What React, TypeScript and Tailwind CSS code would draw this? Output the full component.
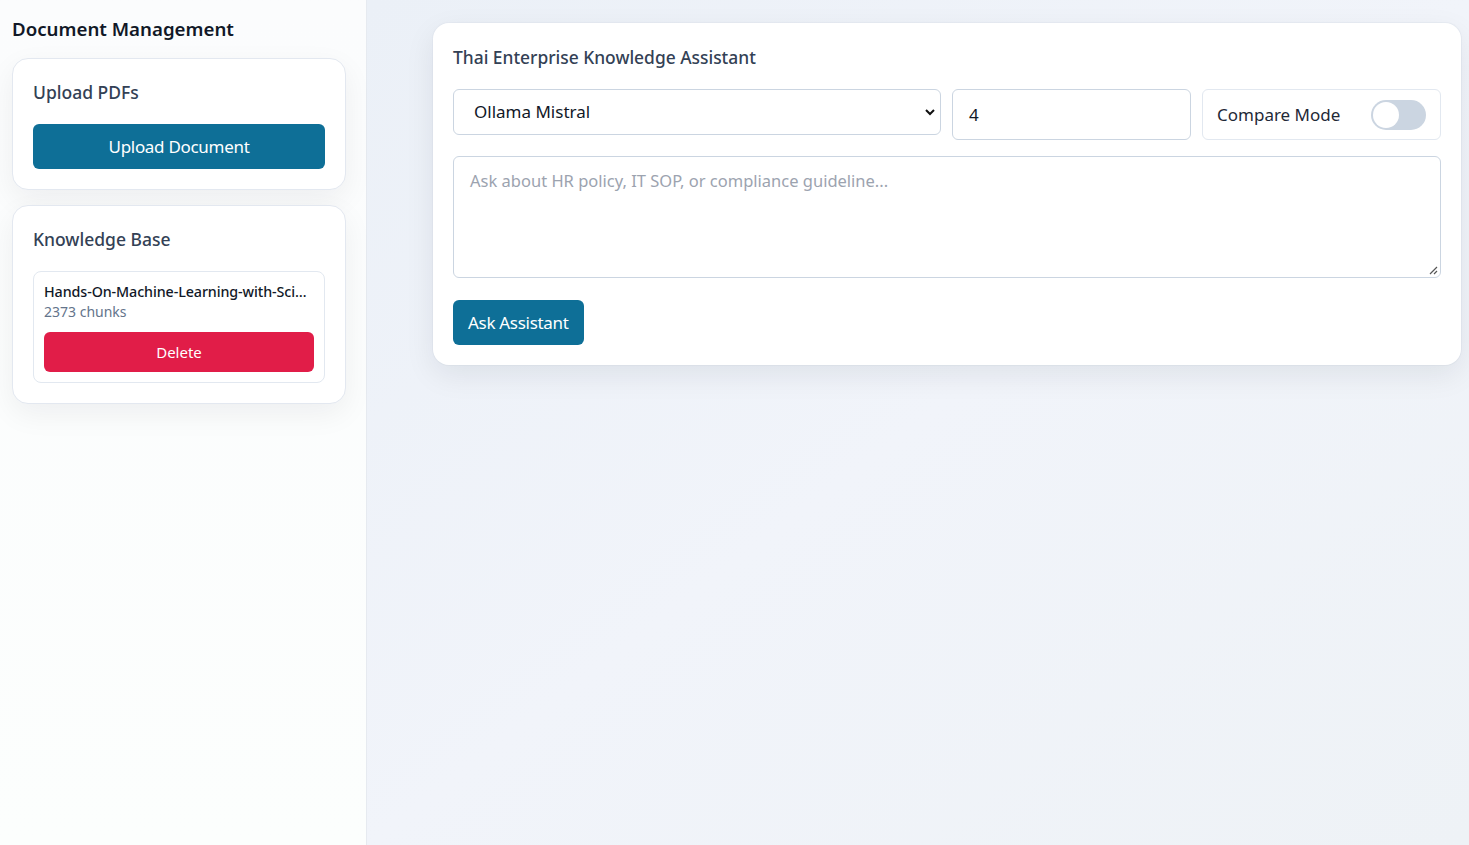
import React from "react";

export default function App() {
  return (
    <div
      className="flex w-[1469px] h-[845px] overflow-hidden"
      style={{ fontFamily: '"Noto Sans", "Open Sans", sans-serif' }}
    >
      {/* Sidebar */}
      <aside className="w-[367px] shrink-0 h-full bg-gradient-to-b from-[#fbfcfd] to-[#fcfefd] border-r border-[#e6eaf0] px-3 pt-[15px]">
        <h1 className="text-[18.7px] font-semibold text-[#111827] leading-[28px]">Document Management</h1>
        <div className="mt-[15px] w-[334px] bg-white rounded-2xl border border-[#e3e8f0] shadow-[0_10px_30px_rgba(15,23,42,0.06)] p-5">
          <h2 className="text-[17.5px] font-medium text-[#334155] leading-[28px] -mt-[1px]">Upload PDFs</h2>
          <button className="mt-[18px] w-full h-[45px] rounded-md bg-[#0e6f97] text-white text-[17px] tracking-[-0.3px]">
            Upload Document
          </button>
        </div>
        <div className="mt-[15px] w-[334px] bg-white rounded-2xl border border-[#e3e8f0] shadow-[0_10px_30px_rgba(15,23,42,0.06)] p-5">
          <h2 className="text-[17.5px] font-medium text-[#334155] leading-[28px] -mt-[1px]">Knowledge Base</h2>
          <div className="mt-[18px] rounded-lg border border-[#e2e8f0] p-[10px]">
            <div className="text-[14.3px] font-medium text-[#111827] leading-[20px] truncate tracking-[-0.1px]">
              Hands-On-Machine-Learning-with-Scikit-Learn-Keras-and-TensorFlow.pdf
            </div>
            <div className="text-[14px] text-[#64748b] leading-[20px]">2373 chunks</div>
            <button className="mt-[10px] w-full h-[40px] rounded-md bg-[#e11d48] text-white text-[15px]">Delete</button>
          </div>
        </div>
      </aside>

      {/* Main */}
      <main className="flex-1 h-full bg-gradient-to-br from-[#ebf0f7] via-[#f1f4fa] to-[#eef2f6] pl-[66px] pr-[8px] pt-[23px]">
        <div className="bg-white rounded-2xl shadow-[0_10px_30px_rgba(15,23,42,0.08),0_0_0_1px_rgba(226,232,240,0.6)] p-5">
          <h2 className="text-[17.4px] font-medium text-[#334155] leading-[28px]">
            Thai Enterprise Knowledge Assistant
          </h2>
          <div className="mt-[18px] grid grid-cols-[488px_239px_1fr] gap-[11px] items-start">
            <div className="relative h-[46px] rounded-md border border-[#cbd5e1] bg-white flex items-center pl-5 text-[17px] text-[#111827]">
              Ollama Mistral
              <svg className="absolute right-[4px] top-[17px]" width="12" height="10" viewBox="0 0 12 10">
                <path d="M2 3 L6 7 L10 3" fill="none" stroke="#111" strokeWidth="2" />
              </svg>
            </div>
            <div className="h-[51px] rounded-md border border-[#cbd5e1] bg-white flex items-center px-4 text-[17px] text-[#111827]">
              4
            </div>
            <div className="h-[51px] rounded-md border border-[#e2e8f0] bg-white flex items-center justify-between pl-[14px] pr-[14px] text-[17px] text-[#1f2937]">
              <span>Compare Mode</span>
              <div className="w-[55px] h-[30px] rounded-full bg-[#cbd5e1] p-[2px] flex items-center">
                <div className="w-[26px] h-[26px] rounded-full bg-white" />
              </div>
            </div>
          </div>
          <div className="mt-[16px] relative h-[122px] rounded-md border border-[#cbd5e1] bg-white px-4 pt-[12px] text-[16.5px] text-[#9ca3af]">
            Ask about HR policy, IT SOP, or compliance guideline...
            <svg className="absolute right-[2px] bottom-[2px]" width="10" height="10" viewBox="0 0 10 10">
              <path d="M9 2 L2 9 M9 6 L6 9" stroke="#555" strokeWidth="1.2" />
            </svg>
          </div>
          <button className="mt-[22px] h-[45px] px-[15px] rounded-md bg-[#0e6f97] text-white text-[17px] tracking-[-0.3px]">
            Ask Assistant
          </button>
        </div>
      </main>
    </div>
  );
}
